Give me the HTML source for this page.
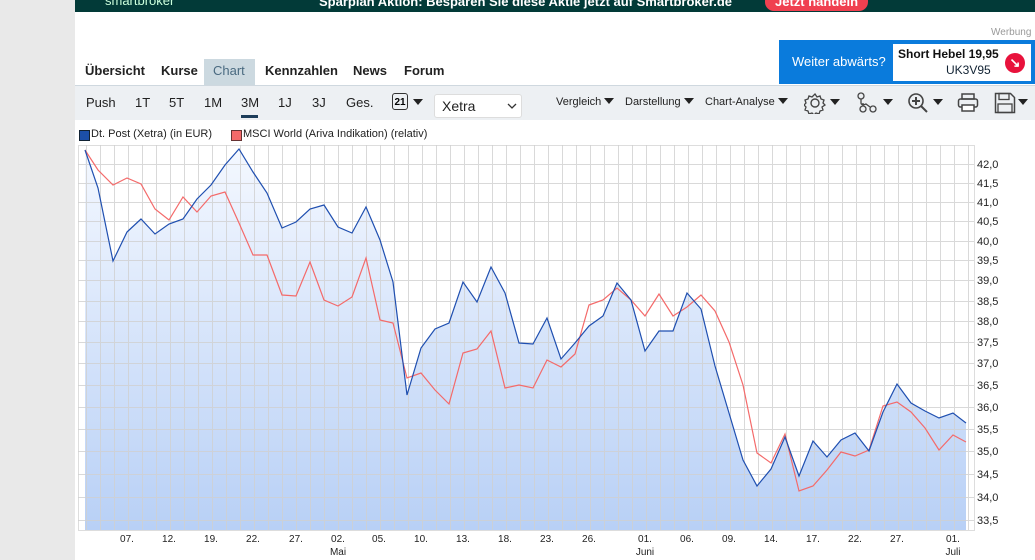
<!DOCTYPE html>
<html><head><meta charset="utf-8"><style>
body{margin:0;width:1035px;height:560px;overflow:hidden;background:#fff;font-family:"Liberation Sans",sans-serif;position:relative}
.left{position:absolute;left:0;top:0;width:75px;height:560px;background:#e9e9e9}
.top{position:absolute;left:75px;top:0;width:960px;height:12px;background:#023a38;color:#fff;font-weight:bold;font-size:13px;overflow:hidden}
.abs{position:absolute;white-space:nowrap}
.tabs span{position:absolute;top:63px;font-size:13px;font-weight:bold;color:#222}
.tb{position:absolute;left:75px;top:85px;width:960px;height:34px;background:#edf0f3;border-top:1px solid #cfd8df}
.tb span{position:absolute;top:9px;font-size:13px;color:#222}
.tb .s{font-size:11px;top:10px}
.tri{display:inline-block;border-left:5px solid transparent;border-right:5px solid transparent;border-top:6px solid #222;margin-left:3px;vertical-align:1px}
</style></head><body>
<div class="left"></div>
<div class="top"><span class="abs" style="left:30px;top:-7px;font-weight:normal;color:#cfd">smartbroker</span><span class="abs" style="left:244px;top:-6px">Sparplan Aktion: Besparen Sie diese Aktie jetzt auf Smartbroker.de</span><span class="abs" style="left:690px;top:-8px;background:#f04050;border-radius:9px;padding:2px 10px">Jetzt handeln</span></div>
<div class="abs" style="left:991px;top:27px;font-size:10px;color:#999">Werbung</div>
<div class="abs" style="left:779px;top:40px;width:256px;height:44px;background:#0a7bdc"></div>
<div class="abs" style="left:792px;top:54px;font-size:13px;color:#fff">Weiter abwärts?</div>
<div class="abs" style="left:893px;top:44px;width:138px;height:37px;background:#fff"></div>
<div class="abs" style="left:898px;top:47px;font-size:12px;font-weight:bold;color:#111">Short Hebel 19,95</div>
<div class="abs" style="left:946px;top:63px;font-size:12px;color:#123">UK3V95</div>
<div class="abs" style="left:1005px;top:53px;width:20px;height:20px;border-radius:50%;background:#e8123c;color:#fff;font-size:13px;text-align:center;line-height:20px;font-weight:bold">↘</div>
<div class="abs" style="left:204px;top:59px;width:51px;height:26px;background:#ccd9e0"></div>
<div class="tabs"><span style="left:85px">Übersicht</span><span style="left:161px">Kurse</span><span style="left:213px;color:#4a6a80;font-weight:normal">Chart</span><span style="left:265px">Kennzahlen</span><span style="left:353px">News</span><span style="left:404px">Forum</span></div>
<div class="tb">
<span style="left:11px">Push</span><span style="left:60px">1T</span><span style="left:94px">5T</span><span style="left:129px">1M</span><span style="left:166px">3M</span><span style="left:203px">1J</span><span style="left:237px">3J</span><span style="left:271px">Ges.</span>
<div class="abs" style="left:166px;top:29px;width:17px;height:3px;background:#1d3d5a"></div>
<div class="abs" style="left:317px;top:7px;width:16px;height:17px;border:1.5px solid #333;border-radius:3px;font-size:10px;font-weight:bold;text-align:center;line-height:17px;box-sizing:border-box">21</div>
<span style="left:335px;top:8px"><i class="tri"></i></span>
<div class="abs" style="left:359px;top:8px;width:88px;height:24px;background:#fff;border:1px solid #ddd;border-radius:3px;box-sizing:border-box"></div>
<span style="left:367px;top:12px;font-size:14px">Xetra</span>
<svg class="abs" style="left:432px;top:17px" width="10" height="6"><path d="M1 1L5 5L9 1" fill="none" stroke="#333" stroke-width="1.3"/></svg>
<span class="s" style="left:481px">Vergleich<i class="tri"></i></span>
<span class="s" style="left:550px">Darstellung<i class="tri"></i></span>
<span class="s" style="left:630px">Chart-Analyse<i class="tri"></i></span>
<svg class="abs" style="left:729px;top:6px" width="22" height="22"><circle cx="11" cy="11" r="4" fill="none" stroke="#444" stroke-width="1.4"/><path d="M11 2l2 3 3-1 1 3 3 1-1 3 2 2-3 2 1 3-3 1-1 3-3-1-2 2-2-2-3 1-1-3-3-1 1-3-2-2 2-2-1-3 3-1 1-3 3 1z" fill="none" stroke="#444" stroke-width="1.3"/></svg>
<span style="left:752px;top:8px"><i class="tri"></i></span>
<svg class="abs" style="left:781px;top:6px" width="22" height="22"><circle cx="5" cy="4" r="3" fill="none" stroke="#444" stroke-width="1.3"/><circle cx="7" cy="17" r="3" fill="none" stroke="#444" stroke-width="1.3"/><circle cx="17" cy="17" r="3" fill="none" stroke="#444" stroke-width="1.3"/><path d="M5 7v4c0 2 3 2 5 1l4 3M7 14v-3" fill="none" stroke="#444" stroke-width="1.3"/></svg>
<span style="left:805px;top:8px"><i class="tri"></i></span>
<svg class="abs" style="left:832px;top:6px" width="22" height="22"><circle cx="9" cy="9" r="7" fill="none" stroke="#444" stroke-width="1.6"/><path d="M14 14l6 6M9 5v8M5 9h8" stroke="#444" stroke-width="2"/></svg>
<span style="left:855px;top:8px"><i class="tri"></i></span>
<svg class="abs" style="left:882px;top:7px" width="22" height="20"><rect x="5" y="1" width="12" height="5" fill="none" stroke="#444" stroke-width="1.5"/><rect x="1.5" y="6" width="19" height="8" rx="2" fill="none" stroke="#444" stroke-width="1.5"/><rect x="5" y="12" width="12" height="6" fill="#fff" stroke="#444" stroke-width="1.5"/></svg>
<svg class="abs" style="left:919px;top:6px" width="22" height="22"><path d="M1.5 1.5h15l4 4v15h-19z" fill="none" stroke="#444" stroke-width="1.5"/><rect x="5" y="1.5" width="10" height="6" fill="none" stroke="#444" stroke-width="1.3"/><rect x="4" y="12" width="14" height="8.5" fill="none" stroke="#444" stroke-width="1.3"/></svg>
<span style="left:940px;top:8px"><i class="tri"></i></span>
</div>
<div class="abs" style="left:79px;top:130px;width:9px;height:9px;background:#1c4fa8;border:1px solid #123"></div>
<div class="abs" style="left:91px;top:128px;font-size:11px;color:#222">Dt. Post (Xetra) (in EUR)</div>
<div class="abs" style="left:231px;top:130px;width:9px;height:9px;background:#f46a6a;border:1px solid #633"></div>
<div class="abs" style="left:243px;top:128px;font-size:11px;color:#222">MSCI World (Ariva Indikation) (relativ)</div>
<svg class="abs" style="left:0;top:0" width="1035" height="560">
<defs><linearGradient id="g" x1="0" y1="0" x2="0" y2="1"><stop offset="0" stop-color="#f4f8ff"/><stop offset="1" stop-color="#b8d0f6"/></linearGradient></defs>
<rect x="78.5" y="145.5" width="896" height="385" fill="#fff" stroke="#ddd"/>
<polygon fill="url(#g)" points="85,530 85,150 98,188 113,261 127,232 141,219 155,234 169,224 183,219 197,199 211,185 225,165 239,149 253,172 267,193 282,228 296,222 310,209 324,205 338,227 352,233 366,207 380,240 393,282 407,395 421,348 435,329 449,323 463,282 477,302 491,267 505,293 519,343 533,344 547,318 561,359 575,343 589,326 603,316 617,283 631,300 645,351 659,331 673,331 687,293 701,309 715,366 729,413 743,460 757,486 771,469 785,437 799,476 813,441 827,457 841,440 855,433 869,451 883,412 897,384 911,403 925,411 939,418 953,413 966,423 966,530"/>
<path stroke="#cfcfcf" stroke-opacity="0.8" stroke-width="1" fill="none" d="M86.5 145V530M100.5 145V530M114.5 145V530M128.5 145V530M142.5 145V530M156.5 145V530M170.5 145V530M184.5 145V530M198.5 145V530M212.5 145V530M226.5 145V530M240.5 145V530M254.5 145V530M268.5 145V530M282.5 145V530M296.5 145V530M310.5 145V530M324.5 145V530M338.5 145V530M352.5 145V530M366.5 145V530M380.5 145V530M394.5 145V530M408.5 145V530M422.5 145V530M436.5 145V530M450.5 145V530M464.5 145V530M478.5 145V530M492.5 145V530M506.5 145V530M520.5 145V530M534.5 145V530M548.5 145V530M562.5 145V530M576.5 145V530M590.5 145V530M604.5 145V530M618.5 145V530M632.5 145V530M646.5 145V530M660.5 145V530M674.5 145V530M688.5 145V530M702.5 145V530M716.5 145V530M730.5 145V530M744.5 145V530M758.5 145V530M772.5 145V530M786.5 145V530M800.5 145V530M814.5 145V530M828.5 145V530M842.5 145V530M856.5 145V530M870.5 145V530M884.5 145V530M898.5 145V530M912.5 145V530M926.5 145V530M940.5 145V530M954.5 145V530M968.5 145V530M78 164.5H974M78 183.5H974M78 202.5H974M78 221.5H974M78 241.5H974M78 260.5H974M78 280.5H974M78 301.5H974M78 321.5H974M78 342.5H974M78 363.5H974M78 385.5H974M78 407.5H974M78 429.5H974M78 451.5H974M78 474.5H974M78 497.5H974M78 520.5H974"/>
<polyline fill="none" stroke="#f46a6a" stroke-width="1.2" points="85,150 98,170 113,185 127,178 141,184 155,209 169,220 183,197 197,212 211,196 225,192 239,223 253,255 267,255 282,295 296,296 310,262 324,300 338,306 352,297 366,258 380,320 393,323 407,378 421,373 435,390 449,404 463,353 477,349 491,331 505,388 519,385 533,388 547,360 561,367 575,354 589,305 603,300 617,288 631,300 645,316 659,294 673,316 687,307 701,295 715,311 729,342 743,385 757,453 771,463 785,434 799,491 813,486 827,470 841,452 855,456 869,450 883,406 897,402 911,412 925,428 939,450 953,435 966,442"/>
<polyline fill="none" stroke="#1f4fb0" stroke-width="1.2" points="85,150 98,188 113,261 127,232 141,219 155,234 169,224 183,219 197,199 211,185 225,165 239,149 253,172 267,193 282,228 296,222 310,209 324,205 338,227 352,233 366,207 380,240 393,282 407,395 421,348 435,329 449,323 463,282 477,302 491,267 505,293 519,343 533,344 547,318 561,359 575,343 589,326 603,316 617,283 631,300 645,351 659,331 673,331 687,293 701,309 715,366 729,413 743,460 757,486 771,469 785,437 799,476 813,441 827,457 841,440 855,433 869,451 883,412 897,384 911,403 925,411 939,418 953,413 966,423"/>
<g font-size="11" fill="#222" font-family="Liberation Sans">
<text x="977" y="168">42,0</text><text x="977" y="187">41,5</text><text x="977" y="206">41,0</text><text x="977" y="225">40,5</text><text x="977" y="245">40,0</text><text x="977" y="264">39,5</text><text x="977" y="284">39,0</text><text x="977" y="305">38,5</text><text x="977" y="325">38,0</text><text x="977" y="346">37,5</text><text x="977" y="367">37,0</text><text x="977" y="389">36,5</text><text x="977" y="411">36,0</text><text x="977" y="433">35,5</text><text x="977" y="455">35,0</text><text x="977" y="478">34,5</text><text x="977" y="501">34,0</text><text x="977" y="524">33,5</text>
</g>
<g font-size="10" fill="#222" font-family="Liberation Sans" text-anchor="middle">
<text x="127" y="542">07.</text><text x="169" y="542">12.</text><text x="211" y="542">19.</text><text x="253" y="542">22.</text><text x="296" y="542">27.</text><text x="338" y="542">02.</text><text x="379" y="542">05.</text><text x="421" y="542">10.</text><text x="463" y="542">13.</text><text x="505" y="542">18.</text><text x="547" y="542">23.</text><text x="589" y="542">26.</text><text x="645" y="542">01.</text><text x="687" y="542">06.</text><text x="729" y="542">09.</text><text x="771" y="542">14.</text><text x="813" y="542">17.</text><text x="855" y="542">22.</text><text x="897" y="542">27.</text><text x="953" y="542">01.</text>
<text x="338" y="555">Mai</text><text x="645" y="555">Juni</text><text x="953" y="555">Juli</text>
</g>
</svg>
</body></html>
